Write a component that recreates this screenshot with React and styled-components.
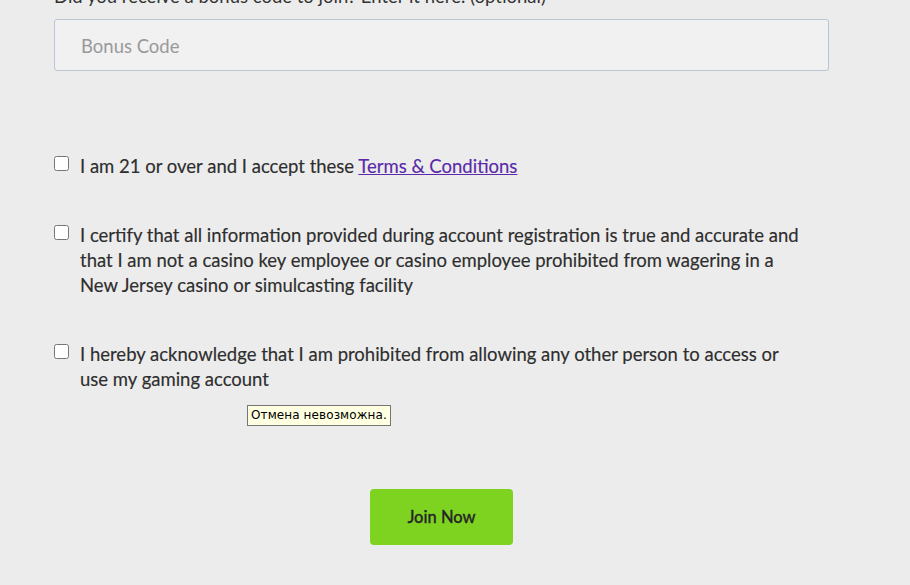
import React from "react";
import styled, { createGlobalStyle } from "styled-components";

const GlobalStyle = createGlobalStyle`
  html, body {
    margin: 0;
    padding: 0;
    background: #ececec;
    overflow: hidden;
  }
  body {
    font-family: Lato, "Open Sans", sans-serif;
    color: #333;
  }
`;

const Page = styled.div`
  position: relative;
  width: 910px;
  height: 585px;
  overflow: hidden;
`;

const Form = styled.form`
  width: 775px;
  margin-left: 54px;
  margin-top: -16px;
  display: flex;
  flex-direction: column;
`;

const Label = styled.label`
  display: block;
  font-size: 18.5px;
  line-height: 25px;
  color: #333;
  margin-bottom: 10px;
`;

const Input = styled.input`
  box-sizing: border-box;
  width: 100%;
  height: 52px;
  padding: 2px 26px 0;
  background: #f1f1f1;
  border: 1px solid #b9c5d3;
  border-radius: 3px;
  font-family: Lato, sans-serif;
  font-size: 18.5px;
  color: #333;
  outline: none;

  &::placeholder {
    color: #999;
  }
`;

const Agreements = styled.div`
  display: flex;
  flex-direction: column;
  gap: 44px;
  margin-top: 83px;
`;

const Row = styled.label`
  display: flex;
  align-items: flex-start;
  gap: 11px;
  font-size: 18.5px;
  line-height: 25px;
  color: #2e2e2e;
`;

const Check = styled.input.attrs({ type: "checkbox" })`
  flex: none;
  width: 15px;
  height: 15px;
  margin: 2px 0 0 0;
`;

const Text = styled.span`
  width: 730px;
  -webkit-text-stroke: 0.15px currentColor;
`;

const Link = styled.a`
  color: #5a2aa8;
  text-decoration: underline;
`;

const Actions = styled.div`
  display: flex;
  justify-content: center;
  margin-top: 97px;
`;

const Button = styled.button`
  width: 143px;
  height: 56px;
  border: none;
  border-radius: 4px;
  background: #7ed321;
  color: #262626;
  font-family: Lato, sans-serif;
  font-size: 16.5px;
  font-weight: 500;
  -webkit-text-stroke: 0.3px currentColor;
  cursor: pointer;
`;

const Tooltip = styled.div`
  position: absolute;
  left: 247px;
  top: 405px;
  padding: 1px 3px 2px 3px;
  background: #ffffe1;
  border: 1px solid #767676;
  font-family: "DejaVu Sans", sans-serif;
  font-size: 12px;
  line-height: 16px;
  letter-spacing: 0.1px;
  color: #000;
  white-space: nowrap;
`;

const items = [
  {
    id: "age",
    text: (
      <>
        I am 21 or over and I accept these <Link href="#">Terms &amp; Conditions</Link>
      </>
    ),
  },
  {
    id: "certify",
    text: "I certify that all information provided during account registration is true and accurate and that I am not a casino key employee or casino employee prohibited from wagering in a New Jersey casino or simulcasting facility",
  },
  {
    id: "ack",
    text: "I hereby acknowledge that I am prohibited from allowing any other person to access or use my gaming account",
  },
];

export default function App() {
  return (
    <Page>
      <GlobalStyle />
      <Form onSubmit={(e) => e.preventDefault()}>
        <Label htmlFor="bonus">
          Did you receive a bonus code to join? Enter it here. (optional)
        </Label>
        <Input id="bonus" placeholder="Bonus Code" />
        <Agreements>
          {items.map((item) => (
            <Row key={item.id}>
              <Check />
              <Text>{item.text}</Text>
            </Row>
          ))}
        </Agreements>
        <Actions>
          <Button type="submit">Join Now</Button>
        </Actions>
      </Form>
      <Tooltip>Отмена невозможна.</Tooltip>
    </Page>
  );
}
